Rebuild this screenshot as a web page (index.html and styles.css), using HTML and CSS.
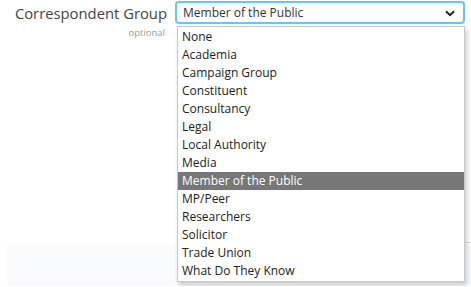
FILE: index.html
```html
<!DOCTYPE html>
<html lang="en">
<head>
  <meta charset="UTF-8" />
  <title>Correspondent Group</title>
  <link rel="stylesheet" href="styles.css">
</head>
<body>

  <div class="form-row">
    <div class="label-col">
      <label class="field-label">Correspondent Group</label>
      <span class="hint">optional</span>
    </div>
    <div class="field">
      <div class="select-box">
        <span class="select-value">Member of the Public</span>
        <svg class="chevron" width="10" height="7" viewBox="0 0 10 7">
          <path d="M1 1.2 L5 5.2 L9 1.2" fill="none" stroke="#222" stroke-width="2"/>
        </svg>
      </div>

      <!-- открытый список -->
      <ul class="options">
        <li>None</li>
        <li>Academia</li>
        <li>Campaign Group</li>
        <li>Constituent</li>
        <li>Consultancy</li>
        <li>Legal</li>
        <li>Local Authority</li>
        <li>Media</li>
        <li class="selected">Member of the Public</li>
        <li>MP/Peer</li>
        <li>Researchers</li>
        <li>Solicitor</li>
        <li>Trade Union</li>
        <li>What Do They Know</li>
      </ul>
    </div>
  </div>

  <div class="divider"></div>
  <div class="bottom-band"></div>

</body>
</html>
```

FILE: styles.css
```css
body {
  margin: 0;
  background: #fff;
  font-family: 'Open Sans', 'Noto Sans', sans-serif;
  color: #333;
  overflow: hidden;
}

.form-row {
  display: flex;
  padding-top: 1px;
  height: 241px;
}

.label-col {
  width: 167px;
  padding-right: 8px;
  text-align: right;
  display: flex;
  flex-direction: column;
}

.field-label {
  font-size: 14.8px;
  color: #444;
  line-height: 22px;
  padding-top: 1px;
}

.hint {
  font-size: 9.5px;
  color: #999;
  line-height: 14px;
  margin-top: 2px;
  margin-right: 2px;
}

.field {
  position: relative;
  width: 290px;
}

.select-box {
  height: 19px;
  border: 2px solid #6cc5e9;
  border-radius: 4px;
  display: flex;
  align-items: center;
  justify-content: space-between;
  padding: 0 8px 0 6px;
  font-size: 12px;
  color: #333;
}

.chevron {
  margin-top: 1px;
}

.options {
  position: absolute;
  top: 25px;
  left: 2px;
  width: 286px;
  margin: 0;
  padding: 1px 0;
  list-style: none;
  background: #fff;
  border: 1px solid #c8c8c8;
  box-shadow: 2px 3px 5px rgba(0, 0, 0, 0.2);
  z-index: 2;
}

.options li {
  height: 18px;
  line-height: 18px;
  padding-left: 4px;
  font-size: 12px;
  color: #222;
}

.options li.selected {
  background: #777;
  color: #fff;
}

.divider {
  height: 1px;
  background: #ddd;
  margin-left: 430px;
}

.bottom-band {
  height: 42px;
  margin-top: 1px;
  margin-left: 7px;
  background: #fafbfd;
}
```
